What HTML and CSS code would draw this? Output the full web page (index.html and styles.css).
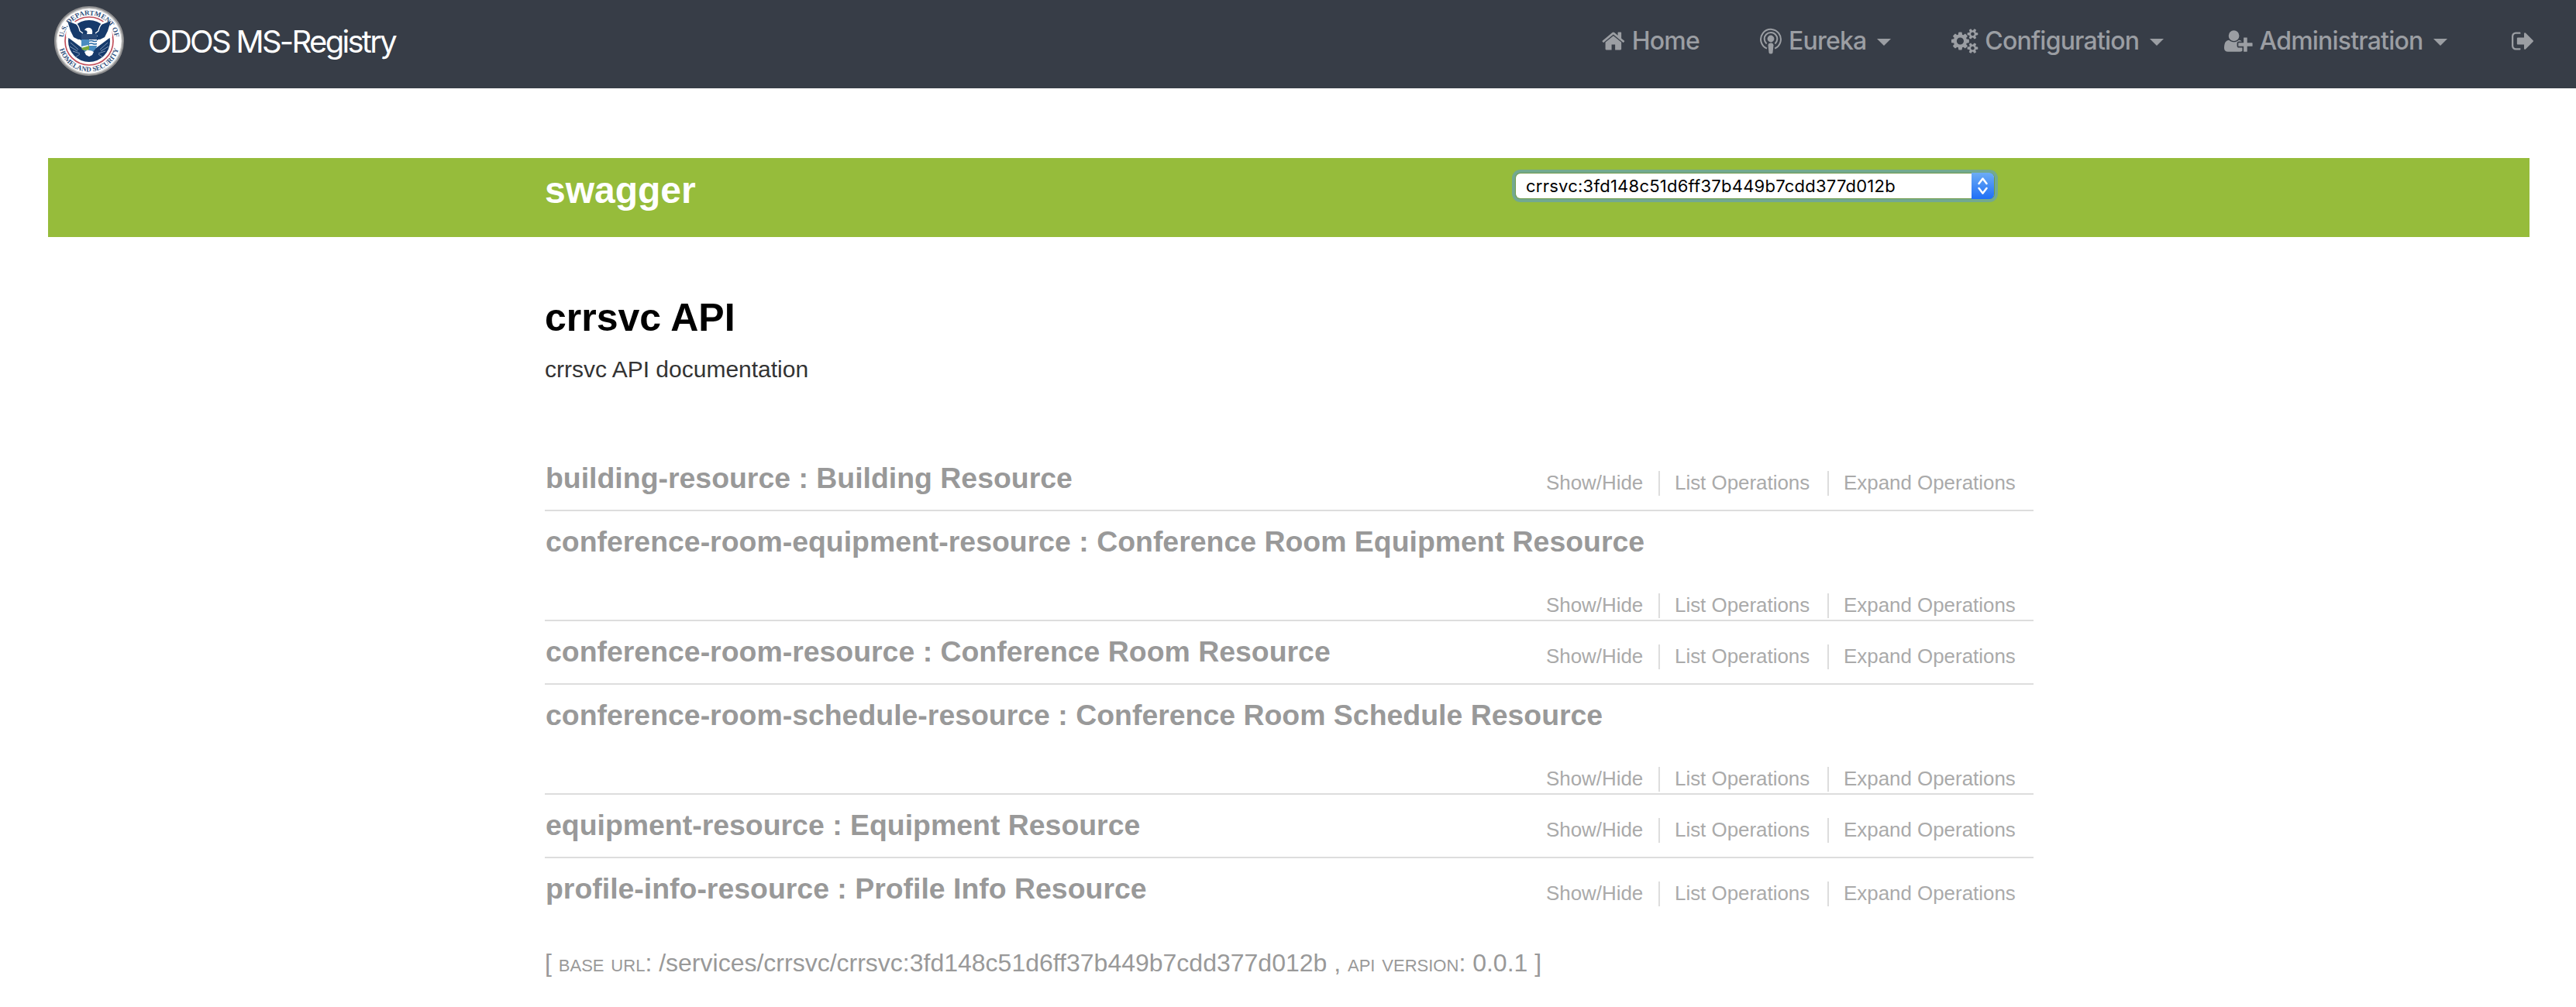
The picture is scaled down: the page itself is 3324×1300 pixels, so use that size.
FILE: index.html
```html
<!DOCTYPE html>
<html lang="en">
<head>
<meta charset="utf-8">
<title>ODOS MS-Registry</title>
<link rel="stylesheet" href="styles.css">
</head>
<body>
<header class="navbar">
  <a class="brand">
    <svg class="seal" viewBox="0 0 90 90">
      <defs>
        <path id="arc-top" d="M11.500 45a33.500 33.500 0 0 1 67 0"/>
        <path id="arc-bottom" d="M5.500 45a39.500 39.500 0 0 0 79 0"/>
      </defs>
      <circle cx="45" cy="45" r="45" fill="#8f8f90"/>
      <circle cx="45" cy="45" r="43" fill="#c9c9c9"/>
      <circle cx="45" cy="45" r="41.500" fill="#fff"/>
      <circle cx="45" cy="45" r="31" fill="none" stroke="#c2505c" stroke-width="1.700"/>
      <path fill="#fff" d="M12 29l4-11 11 2v12zM78 29l-4-11-11 2v12z"/>
      <circle cx="45" cy="45" r="27" fill="#163a6b"/>
      <path fill="#fff" d="M16 24l10 14 10 7v9L20 42l-5-3zM74 24L64 38l-10 7v9l16-12 5-3z"/>
      <path fill="#163a6b" d="M17 19l10 4 8 2 3 8-2 9-5 1-6-3-4-8zM73 19l-10 4-8 2-3 8 2 9 5 1 6-3 4-8z"/>
      <path fill="none" stroke="#fff" stroke-width="1.300" d="M28 22q4 4 5 10l4 3M62 22q-4 4-5 10l-4 3"/>
      <path fill="#fff" d="M39 31q2-4 7-3 4 1 3 8h5l2 3H35l3-2 4-1q2-5-3-5z"/>
      <path fill="#2a4a78" d="M35 36h20v8H35z"/>
      <path fill="#4a8cc0" d="M35 43h20v9q-3 7-10 9-8-2-10-9z"/>
      <path fill="#fff" d="M45 43h10v8H45zM35 52l9-2v8q-6-1-9-6z"/>
      <path fill="none" stroke="#2a6ba5" stroke-width="1.400" d="M45 45q3-1 5 0t5 0M45 48.500q3-1 5 0t5 0"/>
      <path fill="#78a83c" d="M35 54l10-3v5q-5 2-9 0z"/>
      <path fill="#fff" d="M39 59q6-4 12 0l-2 4-4 2-4-2z"/>
      <g fill="none" stroke="#8ba0bd" stroke-width=".9"><path d="M21 47l10 9M20 52l10 6M24 58l9 3M33 62l-6 4M69 47l-10 9M70 52l-10 6M66 58l-9 3M57 62l6 4"/></g>
      <g class="seal-text" text-anchor="middle"><text><textPath href="#arc-top" startOffset="50%">U.S. DEPARTMENT OF</textPath></text><text><textPath href="#arc-bottom" startOffset="50%">HOMELAND SECURITY</textPath></text></g>
    </svg>
    <span class="brand-name">ODOS MS-Registry</span>
  </a>
  <nav class="menu">
    <a class="item home"><svg class="icon" viewBox="64 0 1664 1792"><path d="M1472 992v480q0 26-19 45t-45 19h-384v-384h-256v384h-384q-26 0-45-19t-19-45v-480q0-1 .5-3t.5-3l575-474 575 474q1 2 1 6zm223-69l-62 74q-8 9-21 11h-3q-13 0-21-7l-692-577-692 577q-12 8-24 7-13-2-21-11l-62-74q-8-10-7-23.500t11-21.500l719-599q32-26 76-26t76 26l244 204v-195q0-14 9-23t23-9h192q14 0 23 9t9 23v408l219 182q10 8 11 21.500t-7 23.500z"/></svg><span class="label">Home</span></a>
    <a class="item eureka"><svg class="icon" viewBox="0 0 28 32"><circle cx="14" cy="13" r="4.400"/><path d="M10.500 21.500q0-3 3.500-3t3.500 3l-1 9.500q-.3 1.500-2.500 1.500T11.500 31z"/><g fill="none" stroke="currentColor" stroke-width="2"><path d="M8.600 19.500a8.300 8.300 0 1 1 10.800 0M8.900 25.600a12.900 12.900 0 1 1 10.200 0"/></g></svg><span class="label">Eureka</span><i class="caret"></i></a>
    <a class="item config"><svg class="icon" viewBox="-64 0 1920 1792"><path d="M832 896q0-106-75-181t-181-75-181 75-75 181 75 181 181 75 181-75 75-181zm768 512q0-52-38-90t-90-38-90 38-38 90q0 53 37.500 90.500t90.500 37.500 90.500-37.500 37.500-90.500zm0-1024q0-52-38-90t-90-38-90 38-38 90q0 53 37.500 90.500t90.500 37.500 90.500-37.500 37.500-90.500zm-384 421v185q0 10-7 19.500t-16 10.500l-155 24q-11 35-32 76 34 48 90 115 7 11 7 20 0 12-7 19-23 30-82.500 89.500t-78.500 59.500q-11 0-21-7l-115-90q-37 19-77 31-11 108-23 155-7 24-30 24h-186q-11 0-20-7.500t-10-17.500l-23-153q-34-10-75-31l-118 89q-7 7-20 7-11 0-21-8-144-133-144-160 0-9 7-19 10-14 41-53t47-61q-23-44-35-82l-152-24q-10-1-17-9.500t-7-19.500v-185q0-10 7-19.500t16-10.500l155-24q11-35 32-76-34-48-90-115-7-11-7-20 0-12 7-20 22-30 82-89t79-59q11 0 21 7l115 90q34-18 77-32 11-108 23-154 7-24 30-24h186q11 0 20 7.500t10 17.500l23 153q34 10 75 31l118-89q8-7 20-7 11 0 21 8 144 133 144 160 0 8-7 19-12 16-42 54t-45 60q23 48 34 82l152 23q10 2 17 10.500t7 19.500zm640 533v140q0 16-149 31-12 27-30 52 51 113 51 138 0 4-4 7-122 71-124 71-8 0-46-47t-52-68q-20 2-30 2t-30-2q-14 21-52 68t-46 47q-2 0-124-71-4-3-4-7 0-25 51-138-18-25-30-52-149-15-149-31v-140q0-16 149-31 13-29 30-52-51-113-51-138 0-4 4-7 4-2 35-20t59-34 30-16q8 0 46 46.500t52 67.500q20-2 30-2t30 2q51-71 92-112l6-2q4 0 124 70 4 3 4 7 0 25-51 138 17 23 30 52 149 15 149 31zm0-1024v140q0 16-149 31-12 27-30 52 51 113 51 138 0 4-4 7-122 71-124 71-8 0-46-47t-52-68q-20 2-30 2t-30-2q-14 21-52 68t-46 47q-2 0-124-71-4-3-4-7 0-25 51-138-18-25-30-52-149-15-149-31v-140q0-16 149-31 13-29 30-52-51-113-51-138 0-4 4-7 4-2 35-20t59-34 30-16q8 0 46 46.500t52 67.500q20-2 30-2t30 2q51-71 92-112l6-2q4 0 124 70 4 3 4 7 0 25-51 138 17 23 30 52 149 15 149 31z"/></svg><span class="label">Configuration</span><i class="caret"></i></a>
    <a class="item admin"><svg class="icon" viewBox="0 0 2048 1792"><path d="M704 896q-159 0-271.500-112.500t-112.500-271.500 112.500-271.500 271.500-112.500 271.500 112.500 112.500 271.500-112.500 271.500-271.500 112.500zm960 128h352q13 0 22.500 9.500t9.500 22.500v192q0 13-9.500 22.500t-22.500 9.500h-352v352q0 13-9.500 22.500t-22.500 9.500h-192q-13 0-22.500-9.500t-9.500-22.500v-352h-352q-13 0-22.500-9.500t-9.500-22.500v-192q0-13 9.500-22.500t22.500-9.500h352v-352q0-13 9.500-22.500t22.500-9.500h192q13 0 22.500 9.500t9.500 22.500v352zm-736 224q0 52 38 90t90 38h256v238q-68 50-171 50h-874q-121 0-194-69t-73-190q0-53 3.500-103.500t14-109 26.500-108.500 43-97.500 62-81 85.500-53.500 111.500-20q19 0 39 17 79 61 154.500 91.500t164.500 30.500 164.500-30.500 154.500-91.500q20-17 39-17 132 0 217 96h-223q-52 0-90 38t-38 90v192z"/></svg><span class="label">Administration</span><i class="caret"></i></a>
    <a class="item logout"><svg class="icon" viewBox="64 0 1664 1792"><path d="M704 1440q0 4 1 20t.5 26.500-3 23.500-10 19.500-20.500 6.500h-320q-119 0-203.500-84.500t-84.500-203.500v-704q0-119 84.500-203.500t203.500-84.500h320q13 0 22.500 9.500t9.500 22.500q0 4 1 20t.5 26.500-3 23.500-10 19.500-20.500 6.500h-320q-66 0-113 47t-47 113v704q0 66 47 113t113 47h312l11.500 1 11.500 3 8 5.500 7 9 2 13.500zm928-544q0 26-19 45l-544 544q-19 19-45 19t-45-19-19-45v-288h-448q-26 0-45-19t-19-45v-384q0-26 19-45t45-19h448v-288q0-26 19-45t45-19 45 19l544 544q19 19 19 45z"/></svg></a>
  </nav>
</header>
<div class="swagger-bar">
  <div class="wrap">
    <span class="logo">swagger</span>
    <div class="select"><span class="value">crrsvc:3fd148c51d6ff37b449b7cdd377d012b</span><span class="arrows"><svg viewBox="0 0 29 34"><path d="M9.500 14l5-6.500 5 6.500M9.500 20l5 6.500 5-6.500"/></svg></span></div>
  </div>
</div>
<main class="content">
  <h1>crrsvc API</h1>
  <p class="desc">crrsvc API documentation</p>
  <ul class="resources">
    <li class="resource"><h2>building-resource : Building Resource</h2><div class="ops"><a>Show/Hide</a><a>List Operations</a><a>Expand Operations</a></div></li>
    <li class="resource tall"><h2>conference-room-equipment-resource : Conference Room Equipment Resource</h2><div class="ops"><a>Show/Hide</a><a>List Operations</a><a>Expand Operations</a></div></li>
    <li class="resource"><h2>conference-room-resource : Conference Room Resource</h2><div class="ops"><a>Show/Hide</a><a>List Operations</a><a>Expand Operations</a></div></li>
    <li class="resource tall"><h2>conference-room-schedule-resource : Conference Room Schedule Resource</h2><div class="ops"><a>Show/Hide</a><a>List Operations</a><a>Expand Operations</a></div></li>
    <li class="resource"><h2>equipment-resource : Equipment Resource</h2><div class="ops"><a>Show/Hide</a><a>List Operations</a><a>Expand Operations</a></div></li>
    <li class="resource"><h2>profile-info-resource : Profile Info Resource</h2><div class="ops"><a>Show/Hide</a><a>List Operations</a><a>Expand Operations</a></div></li>
  </ul>
  <p class="footer">[ <span class="sc">base url</span>: /services/crrsvc/crrsvc:3fd148c51d6ff37b449b7cdd377d012b , <span class="sc">api version</span>: 0.0.1 ]</p>
</main>
</body>
</html>
```
FILE: styles.css
```css
* { box-sizing: border-box; }
body { margin: 0; background: #fff; font-family: "Liberation Sans", Arial, sans-serif; height: 1300px; overflow: hidden; }
h1, h2, p, ul { margin: 0; padding: 0; }

.navbar { height: 114px; background: #373d47; display: flex; justify-content: space-between; padding: 0 51px 0 70px; font-family: Inter, sans-serif; }
.brand { display: flex; align-items: flex-start; padding-top: 8px; }
.seal { width: 90px; height: 90px; flex: none; }
.seal-text { font-family: "Liberation Serif", serif; font-size: 9px; font-weight: 700; fill: #33527d; }
.brand-name { margin: 21px 0 0 31px; font-size: 40px; line-height: 50px; letter-spacing: -2.7px; color: #fff; white-space: nowrap; }
.menu { display: flex; color: #9b9ea3; }
.item { display: flex; align-items: flex-start; padding-top: 37px; flex: none; }
.icon { height: 32px; fill: currentColor; flex: none; overflow: visible; }
.label { font-size: 32px; line-height: 40px; margin: -4px 0 0 9px; white-space: nowrap; font-weight: 450; letter-spacing: -0.8px; }
.caret { margin: 13px 0 0 14px; border: 9.200px solid transparent; border-top-color: currentColor; border-bottom: 0; flex: none; }
.home { width: 204px; }
.eureka { width: 247px; }
.config { width: 352px; }
.admin { width: 371px; }
.logout { width: 32px; }

.swagger-bar { margin: 90px 60px 0 62px; height: 102px; background: #96bc3b; }
.wrap { width: 1920px; margin-left: 641px; display: flex; justify-content: space-between; align-items: flex-start; }
.logo { font-weight: 700; font-size: 48px; line-height: 60px; color: #fff; margin-top: 12px; }
.select { margin: 20px 50px 0 0; width: 617px; height: 32px; border-radius: 6px; background: #fff; box-shadow: 0 0 0 1px #6f9a4a, 0 0 0 5px #73a990; display: flex; justify-content: space-between; }
.value { font: 22px/32px Inter, sans-serif; letter-spacing: 0.24px; color: #000; padding-left: 13px; white-space: nowrap; }
.arrows { width: 29px; height: 34px; margin-top: -1px; border-radius: 0 6px 6px 0; background: linear-gradient(#6cacf5, #1f6ff6); flex: none; }
.arrows svg { display: block; fill: none; stroke: #fff; stroke-width: 2.500; stroke-linecap: round; stroke-linejoin: round; }

.content { width: 1921px; margin-left: 703px; }
h1 { font-size: 50px; line-height: 60px; color: #000; margin-top: 74px; }
.desc { font-size: 30px; line-height: 40px; color: #333; margin-top: 17px; }
.resources { list-style: none; margin: 81px 0 0; }
.resource { height: 82px; border-bottom: 2px solid #ddd; display: flex; justify-content: space-between; align-items: flex-start; padding-top: 18px; color: #999; }
.resource:last-child { border-bottom-color: transparent; }
.resource h2 { font-size: 37.440px; line-height: 42px; padding-left: 1px; white-space: nowrap; }
.ops { display: grid; grid-template-columns: 145px 218px 266px; margin-top: 12px; color: #aaa; }
.ops a { font-size: 25.920px; line-height: 30px; padding-bottom: 2px; white-space: nowrap; }
.ops a + a { border-left: 2px solid #ddd; padding-left: 19px; }
.resource.tall { height: 142px; flex-direction: column; justify-content: flex-start; }
.tall .ops { align-self: flex-end; margin-top: 46px; }
.footer { font-size: 32px; line-height: 40px; color: #999; margin-top: 33px; white-space: nowrap; }
.sc { font-variant: small-caps; }
```
